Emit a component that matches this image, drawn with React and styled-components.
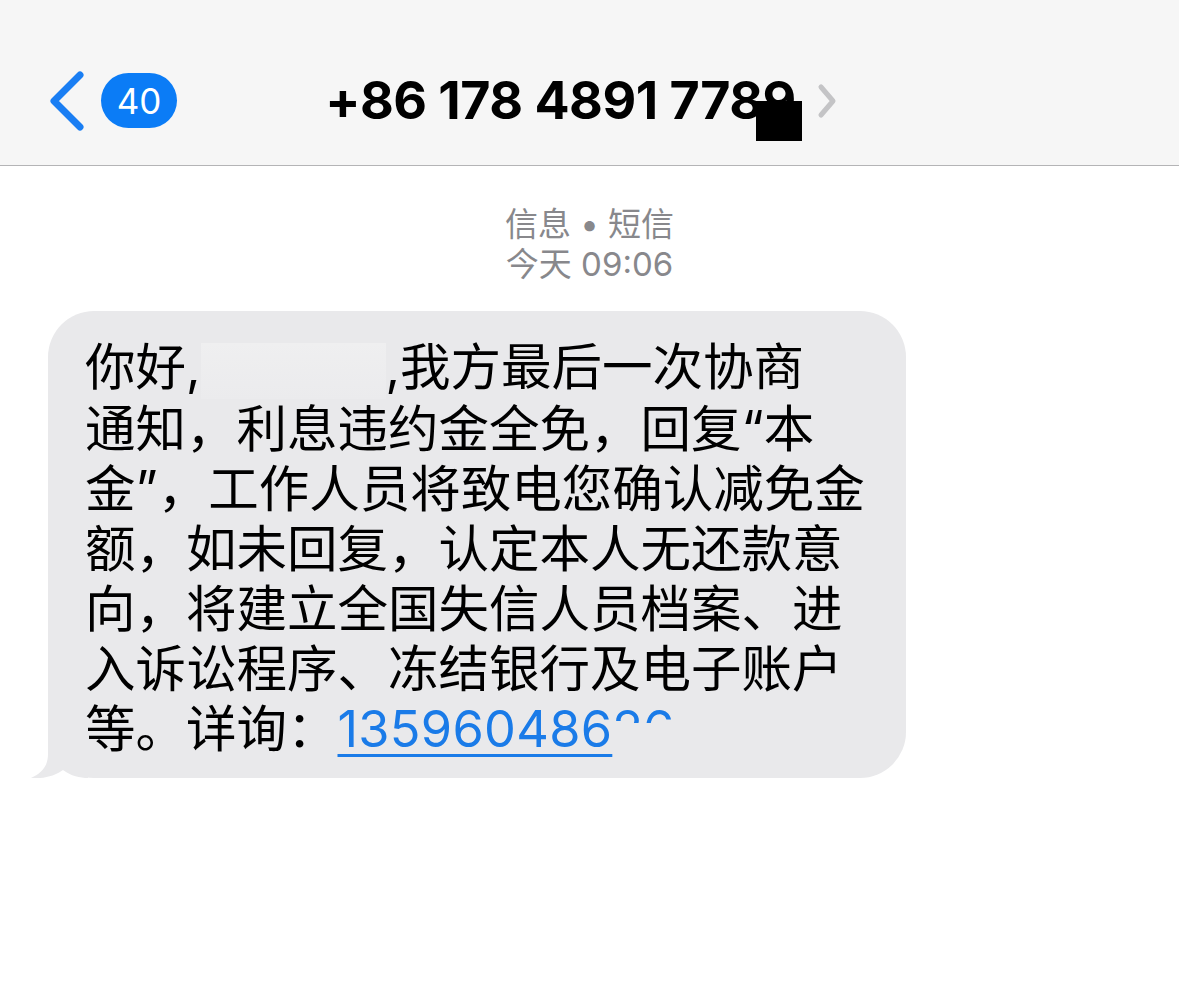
import React from "react";
import styled, { createGlobalStyle } from "styled-components";

const Global = createGlobalStyle`
  html, body { margin: 0; padding: 0; background: #fff; }
  body { font-family: Inter, "Noto Sans CJK SC", sans-serif; -webkit-font-smoothing: antialiased; }
`;

const Screen = styled.div`
  width: 1179px;
  height: 984px;
  overflow: hidden;
  background: #fff;
  display: flex;
  flex-direction: column;
`;

const Header = styled.header`
  height: 166px;
  box-sizing: border-box;
  background: #f6f6f6;
  border-bottom: 1px solid #b4b4b6;
  padding: 36px 0 0 0;
  display: grid;
  grid-template-columns: 1fr auto 1fr;
  align-items: center;
`;

const Back = styled.div`
  display: flex;
  align-items: center;
  gap: 14px;
  padding-left: 43px;
`;

const Badge = styled.span`
  height: 55px;
  min-width: 76px;
  box-sizing: border-box;
  border-radius: 28px;
  background: #0b7cf6;
  color: #fff;
  font-family: Inter, sans-serif;
  font-size: 35px;
  font-weight: 400;
  display: flex;
  align-items: center;
  justify-content: center;
`;

const TitleGroup = styled.div`
  display: flex;
  align-items: center;
  gap: 20px;
  margin-left: -16px;
`;

const Title = styled.span`
  position: relative;
  font-family: Inter, sans-serif;
  font-size: 52px;
  font-weight: 700;
  line-height: 60px;
  color: #000;
  letter-spacing: -0.5px;
`;

const Redact = styled.span`
  position: absolute;
  right: -6px;
  top: 30px;
  width: 46px;
  height: 40px;
  background: #000;
`;

const Meta = styled.div`
  margin-top: 38px;
  text-align: center;
  color: #88888c;
  font-family: Inter, "Noto Sans CJK SC", sans-serif;
  font-size: 33px;
  line-height: 40px;
`;

const Thread = styled.div`
  padding: 27px 0 0 48px;
`;

const Bubble = styled.div`
  position: relative;
  width: 858px;
  box-sizing: border-box;
  background: #e9e9eb;
  border-radius: 46px;
  padding: 26px 0 19px 37px;
  color: #000;
  font-family: Inter, "Noto Sans CJK SC", sans-serif;
  font-size: 50.5px;
  line-height: 60px;
`;

const Line = styled.div`
  white-space: nowrap;
`;

const Blank = styled.span`
  display: inline-block;
  width: 185px;
  height: 56px;
  vertical-align: middle;
  background: linear-gradient(180deg, #efeff0 0%, #ebebed 100%);
`;

const Link = styled.span`
  color: #1a7be8;
  text-decoration: underline;
  text-decoration-thickness: 3px;
  text-underline-offset: 7px;
  font-family: Inter, sans-serif;
  letter-spacing: 0.3px;
`;

const Clipped = styled.span`
  display: inline-block;
  vertical-align: top;
  height: 24px;
  overflow: hidden;
  color: #1a7be8;
  font-family: Inter, sans-serif;
`;

const Tail = styled.svg`
  position: absolute;
  left: -20px;
  bottom: 0;
  width: 60px;
  height: 60px;
`;

export default function App() {
  return (
    <Screen>
      <Global />
      <Header>
        <Back>
          <svg width="44" height="64" viewBox="0 0 44 64">
            <path d="M37 6 L11 32 L37 58" fill="none" stroke="#1a7ef3" strokeWidth="7" strokeLinecap="round" strokeLinejoin="round" />
          </svg>
          <Badge>40</Badge>
        </Back>
        <TitleGroup>
          <Title>
            +86 178 4891 7789
            <Redact />
          </Title>
          <svg width="22" height="36" viewBox="0 0 22 36">
            <path d="M5 4 L17 18 L5 32" fill="none" stroke="#c4c4c6" strokeWidth="5" strokeLinecap="round" strokeLinejoin="round" />
          </svg>
        </TitleGroup>
        <div />
      </Header>
      <Meta>
        <div>信息 • 短信</div>
        <div>今天 09:06</div>
      </Meta>
      <Thread>
        <Bubble>
          <Tail viewBox="0 0 60 60">
            <path d="M20 0 L20 36 C20 48 14 55 3 60 C15 61 27 58 35 52 C43 58 52 60 60 60 L60 0 Z" fill="#e9e9eb" />
          </Tail>
          <Line>你好,<Blank />,我方最后一次协商</Line>
          <Line>通知，利息违约金全免，回复“本</Line>
          <Line>金”，工作人员将致电您确认减免金</Line>
          <Line>额，如未回复，认定本人无还款意</Line>
          <Line>向，将建立全国失信人员档案、进</Line>
          <Line>入诉讼程序、冻结银行及电子账户</Line>
          <Line>等。详询：<Link>135960486</Link><Clipped>26</Clipped></Line>
        </Bubble>
      </Thread>
    </Screen>
  );
}
